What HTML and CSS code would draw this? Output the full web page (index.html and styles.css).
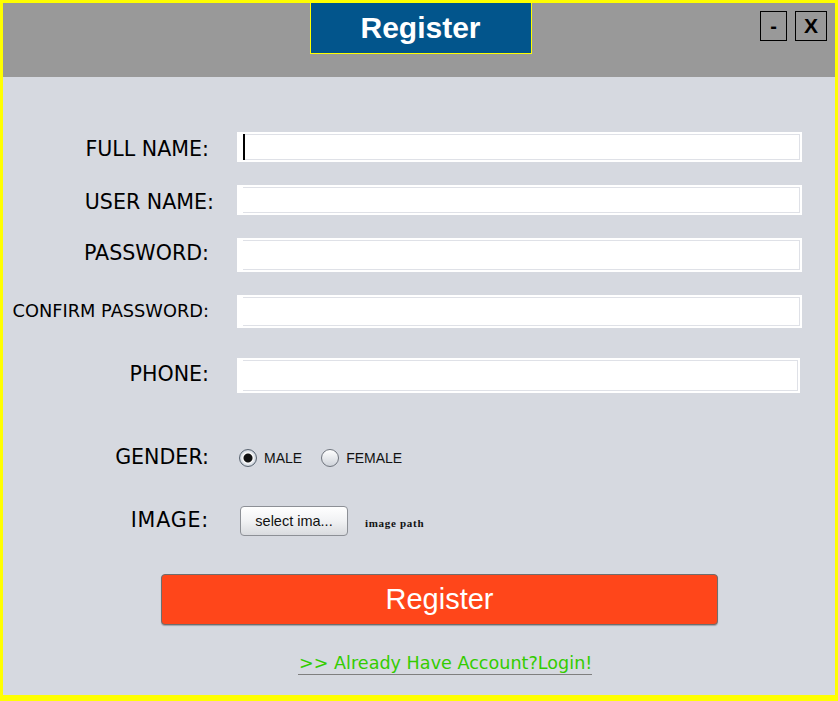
FILE: index.html
```html
<!DOCTYPE html>
<html lang="en">
<head>
<meta charset="utf-8">
<title>Register</title>
<link rel="stylesheet" href="styles.css">
</head>
<body>
<div class="window">
  <header class="titlebar">
    <div class="title-spacer"></div>
    <h1 class="title">Register</h1>
    <div class="win-controls">
      <span class="win-btn win-min">-</span>
      <span class="win-btn win-close">X</span>
    </div>
  </header>
  <main class="content">
    <div class="row row-1">
      <label class="label">FULL NAME:</label>
      <div class="field"><div class="field-inner"><span class="caret"></span></div></div>
    </div>
    <div class="row row-2">
      <label class="label label-wide">USER NAME:</label>
      <div class="field"><div class="field-inner"></div></div>
    </div>
    <div class="row row-3">
      <label class="label">PASSWORD:</label>
      <div class="field"><div class="field-inner"></div></div>
    </div>
    <div class="row row-4">
      <label class="label label-small">CONFIRM PASSWORD:</label>
      <div class="field"><div class="field-inner"></div></div>
    </div>
    <div class="row row-5">
      <label class="label">PHONE:</label>
      <div class="field field-narrow"><div class="field-inner"></div></div>
    </div>
    <div class="row row-6">
      <label class="label">GENDER:</label>
      <div class="radios">
        <span class="radio-item"><span class="radio radio-on"></span><span class="radio-text">MALE</span></span>
        <span class="radio-item"><span class="radio"></span><span class="radio-text">FEMALE</span></span>
      </div>
    </div>
    <div class="row row-7">
      <label class="label label-image">IMAGE:</label>
      <div class="image-pick">
        <span class="select-btn">select ima...</span>
        <span class="image-path">image path</span>
      </div>
    </div>
    <div class="submit">Register</div>
    <div class="login-wrap"><span class="login-link">&gt;&gt; Already Have Account?Login!</span></div>
  </main>
</div>
</body>
</html>
```

FILE: styles.css
```css
* { box-sizing: border-box; }
html, body { margin: 0; padding: 0; }
body {
  width: 838px;
  height: 701px;
  overflow: hidden;
  background: #ffff00;
  font-family: "DejaVu Sans", Verdana, sans-serif;
}
.window {
  width: 838px;
  height: 701px;
  border-style: solid;
  border-color: #ffff00;
  border-width: 3px 3px 6px 3px;
  background: #d6d9e0;
  display: flex;
  flex-direction: column;
}
.titlebar {
  height: 74px;
  background: #999999;
  display: grid;
  grid-template-columns: 1fr auto 1fr;
  align-items: start;
}
.title {
  margin: 0 0 0 3px;
  width: 222px;
  height: 51px;
  background: #02558c;
  border: 1px solid #ffff00;
  border-top: none;
  color: #ffffff;
  font-family: "Liberation Sans", Arial, sans-serif;
  font-weight: bold;
  font-size: 30px;
  line-height: 50px;
  text-align: center;
}
.win-controls {
  display: flex;
  justify-content: flex-end;
  gap: 8px;
  padding: 8px 8px 0 0;
}
.win-btn {
  height: 30px;
  border: 1px solid #000;
  display: flex;
  align-items: center;
  justify-content: center;
  font-family: "Liberation Sans", Arial, sans-serif;
  font-weight: bold;
  color: #000;
}
.win-min { width: 27px; font-size: 20px; }
.win-close { width: 32px; font-size: 21px; }

.content {
  flex: 1;
  display: flex;
  flex-direction: column;
}
.row {
  display: flex;
  align-items: center;
}
.row-1 { margin-top: 55px; height: 30px; }
.row-2 { margin-top: 23px; height: 30px; }
.row-3 { margin-top: 23px; height: 34px; }
.row-4 { margin-top: 23px; height: 33px; }
.row-5 { margin-top: 30px; height: 35px; }
.row-6 { margin-top: 49px; height: 30px; }
.row-7 { margin-top: 34px; height: 30px; }

.label {
  width: 206px;
  margin-right: 28px;
  text-align: right;
  font-size: 20.6px;
  color: #000;
  white-space: nowrap;
  padding-bottom: 1px;
}
.row-1 .label, .row-2 .label { padding-bottom: 0; padding-top: 3px; }
.row-3 .label, .row-5 .label { padding-bottom: 4px; }
.row-4 .label { padding-bottom: 2px; }
.row-7 .label { padding-bottom: 2px; }
.label-wide { width: 211px; margin-right: 23px; }
.label-small { font-size: 17.8px; }
.label-image { letter-spacing: 0.8px; }

.field {
  width: 565px;
  height: 100%;
  background: #ffffff;
  padding: 2px 2px 2px 6px;
}
.field-narrow { width: 563px; }
.field-inner {
  height: 100%;
  border: 1px solid #dfe1e7;
  border-left: none;
  display: flex;
  align-items: center;
}
.caret {
  width: 2px;
  height: 26px;
  background: #000;
}

.radios {
  display: flex;
  align-items: center;
  gap: 19px;
  padding-left: 2px;
  padding-top: 2px;
}
.radio-item {
  display: flex;
  align-items: center;
  gap: 7px;
}
.radio {
  width: 18px;
  height: 18px;
  border-radius: 50%;
  border: 1px solid #70757e;
  background: linear-gradient(#ffffff, #cfd3da);
}
.radio-on {
  border-color: #5a6470;
  background: radial-gradient(circle, #111 0, #111 4px, #ffffff 5px, #e9ebef 6px, #b9c4d0 9px);
}
.radio-text {
  font-family: "Liberation Sans", Arial, sans-serif;
  font-size: 14px;
  color: #111;
}

.image-pick {
  display: flex;
  align-items: center;
  gap: 17px;
  padding-left: 3px;
}
.select-btn {
  width: 108px;
  height: 30px;
  border: 1px solid #8d9096;
  border-radius: 4px;
  background: linear-gradient(#ffffff, #f1f2f4 50%, #d9dbdf);
  display: flex;
  align-items: center;
  justify-content: center;
  font-family: "Liberation Sans", Arial, sans-serif;
  font-size: 14.5px;
  color: #111;
}
.image-path {
  font-family: "Liberation Serif", "Times New Roman", serif;
  font-size: 11px;
  font-weight: bold;
  letter-spacing: 0.7px;
  color: #111;
  padding-top: 3px;
}

.submit {
  margin: 38px 0 0 158px;
  width: 557px;
  height: 51px;
  background: #ff461a;
  border: 1px solid #6e6e6e;
  border-radius: 4px;
  box-shadow: 0 1px 1px rgba(0,0,0,0.25);
  color: #ffffff;
  font-family: "Liberation Sans", Arial, sans-serif;
  font-size: 29px;
  display: flex;
  align-items: center;
  justify-content: center;
}
.login-wrap {
  margin: 27px 0 0 295px;
  display: flex;
}
.login-link {
  color: #33cc00;
  font-size: 17.6px;
  line-height: 22px;
  border-bottom: 1px solid #7f7f7f;
  padding: 0 0 0 1px;
  white-space: nowrap;
}
```
